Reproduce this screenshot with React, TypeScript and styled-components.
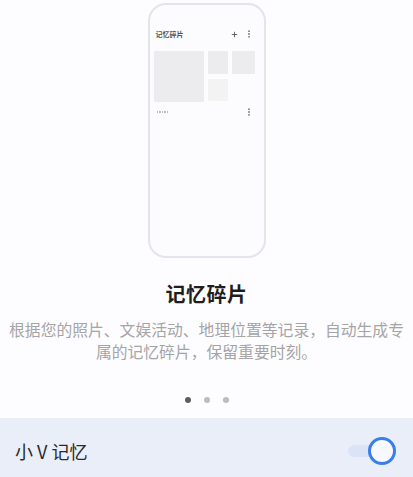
import * as React from 'react';
import styled, { createGlobalStyle } from 'styled-components';

const GlobalStyle = createGlobalStyle`
  html, body {
    margin: 0;
    padding: 0;
    background: #fdfcfe;
  }
  body {
    font-family: "Noto Sans CJK SC", "Noto Sans", sans-serif;
  }
`;

const Page = styled.div`
  width: 413px;
  height: 477px;
  display: flex;
  flex-direction: column;
  align-items: center;
  overflow: hidden;
  background: #fdfcfe;
`;

const Phone = styled.div`
  margin-top: 3px;
  width: 118px;
  height: 255px;
  box-sizing: border-box;
  border: 2px solid #e5e4e9;
  border-radius: 18px;
  background: #fcfbfd;
  padding: 22px 10px 0 4px;
  display: flex;
  flex-direction: column;
`;

const MiniHeader = styled.div`
  display: flex;
  align-items: center;
  height: 14px;
  padding-left: 2px;
`;

const MiniTitle = styled.span`
  flex: 1;
  font-size: 7px;
  font-weight: 700;
  color: #555;
  line-height: 1;
`;

const MiniIcon = styled.span`
  width: 10px;
  display: flex;
  justify-content: center;
  align-items: center;
  margin-left: 4px;
`;

const Tiles = styled.div`
  margin-top: 10px;
  display: grid;
  grid-template-columns: 50px 20px 23px;
  grid-template-rows: 23px 22px;
  column-gap: 4px;
  row-gap: 5px;
`;

const Tile = styled.div<{ $big?: boolean; $soft?: boolean }>`
  background: ${p => (p.$soft ? '#f3f3f4' : '#ececee')};
  border-radius: 1px;
  grid-row: ${p => (p.$big ? 'span 2' : 'auto')};
  height: ${p => (p.$big ? '51px' : 'auto')};
`;

const MiniRow = styled.div`
  margin-top: 7px;
  display: flex;
  align-items: center;
  justify-content: space-between;
  padding-left: 3px;
`;

const MiniCaption = styled.span`
  width: 12px;
  height: 2px;
  background: repeating-linear-gradient(90deg, #bdbdc0 0 1.5px, transparent 1.5px 2.5px);
`;

const Title = styled.h2`
  margin: 22px 0 0;
  font-size: 20px;
  font-weight: 700;
  color: #1e1e1e;
  line-height: 28px;
  letter-spacing: 0.5px;
`;

const Desc = styled.p`
  margin: 11px 0 0;
  padding: 0 8px;
  font-size: 15.8px;
  line-height: 22px;
  color: #a5a5a7;
  text-align: center;
`;

const Dots = styled.div`
  margin-top: 34px;
  display: flex;
  gap: 13px;
`;

const Dot = styled.span<{ $active?: boolean }>`
  width: 6px;
  height: 6px;
  border-radius: 50%;
  background: ${p => (p.$active ? '#5e5e60' : '#bcbcbe')};
`;

const SettingBar = styled.div`
  margin-top: 15px;
  align-self: stretch;
  height: 59px;
  background: #e9eef9;
  display: flex;
  align-items: center;
  padding: 6px 17px 0 15px;
  box-sizing: border-box;
  flex: 1;
`;

const SettingLabel = styled.span`
  flex: 1;
  font-size: 18px;
  color: #2a2a2a;
`;

const Switch = styled.div`
  position: relative;
  width: 48px;
  height: 28px;
  display: flex;
  align-items: center;
`;

const Track = styled.div`
  width: 36px;
  height: 12px;
  border-radius: 6px;
  background: #dbe4f6;
`;

const Knob = styled.div`
  position: absolute;
  right: 0;
  top: 0;
  width: 28px;
  height: 28px;
  box-sizing: border-box;
  border-radius: 50%;
  border: 3px solid #3a7ee9;
  background: #f7f9fe;
`;

function MoreIcon() {
  return (
    <svg width="4" height="8" viewBox="0 0 4 8">
      <circle cx="2" cy="1.2" r="0.9" fill="#777" />
      <circle cx="2" cy="4" r="0.9" fill="#777" />
      <circle cx="2" cy="6.8" r="0.9" fill="#777" />
    </svg>
  );
}

function PlusIcon() {
  return (
    <svg width="7" height="7" viewBox="0 0 7 7">
      <path d="M3.5 0.8v5.4M0.8 3.5h5.4" stroke="#666" strokeWidth="1" />
    </svg>
  );
}

export default function App() {
  return (
    <Page>
      <GlobalStyle />
      <Phone>
        <MiniHeader>
          <MiniTitle>记忆碎片</MiniTitle>
          <MiniIcon><PlusIcon /></MiniIcon>
          <MiniIcon><MoreIcon /></MiniIcon>
        </MiniHeader>
        <Tiles>
          <Tile $big />
          <Tile />
          <Tile />
          <Tile $soft />
        </Tiles>
        <MiniRow>
          <MiniCaption />
          <MiniIcon><MoreIcon /></MiniIcon>
        </MiniRow>
      </Phone>
      <Title>记忆碎片</Title>
      <Desc>
        根据您的照片、文娱活动、地理位置等记录，自动生成专属的记忆碎片，保留重要时刻。
      </Desc>
      <Dots>
        <Dot $active />
        <Dot />
        <Dot />
      </Dots>
      <SettingBar>
        <SettingLabel>小 V 记忆</SettingLabel>
        <Switch>
          <Track />
          <Knob />
        </Switch>
      </SettingBar>
    </Page>
  );
}
